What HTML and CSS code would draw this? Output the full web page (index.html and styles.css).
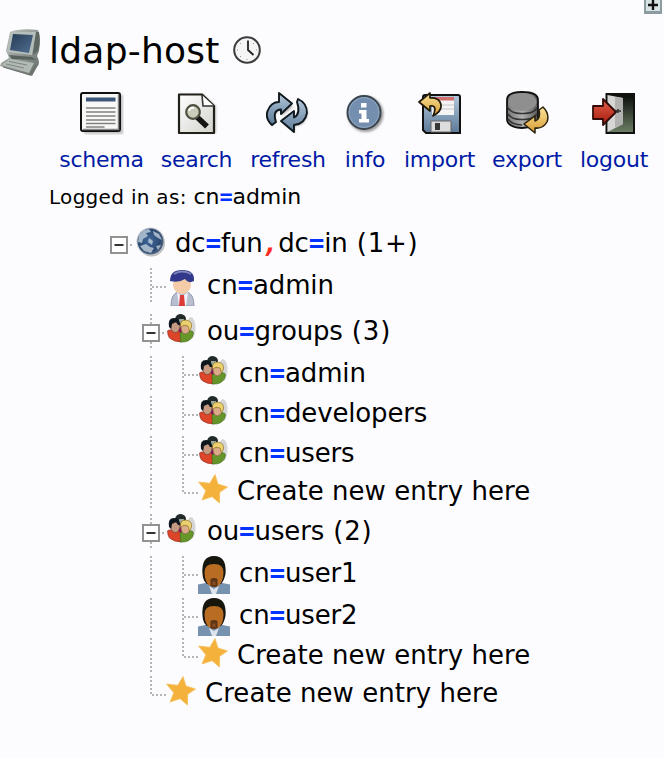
FILE: index.html
```html
<!DOCTYPE html>
<html lang="en">
<head>
<meta charset="utf-8">
<title>ldap-host</title>
<link rel="stylesheet" href="styles.css">
</head>
<body>
<svg class="defs" aria-hidden="true">
  <defs>
    <linearGradient id="gMetal" x1="0" y1="0" x2="1" y2="1"><stop offset="0" stop-color="#c5cac6"/><stop offset="1" stop-color="#626b67"/></linearGradient>
    <linearGradient id="gScreen" x1="0" y1="0" x2="1" y2="1"><stop offset="0" stop-color="#263b55"/><stop offset="1" stop-color="#526f91"/></linearGradient>
    <linearGradient id="gPaper" x1="0" y1="0" x2="1" y2="1"><stop offset="0" stop-color="#fff"/><stop offset="1" stop-color="#d2d3cd"/></linearGradient>
    <linearGradient id="gBlue" x1="0" y1="0" x2="0" y2="1"><stop offset="0" stop-color="#b4c9dc"/><stop offset="1" stop-color="#5b7997"/></linearGradient>
    <linearGradient id="gGold" x1="0" y1="0" x2="0" y2="1"><stop offset="0" stop-color="#fbe39a"/><stop offset="1" stop-color="#d89c32"/></linearGradient>
    <linearGradient id="gRed" x1="0" y1="0" x2="0" y2="1"><stop offset="0" stop-color="#e0604a"/><stop offset="1" stop-color="#a9190d"/></linearGradient>
    <linearGradient id="gDark" x1="0" y1="0" x2="0" y2="1"><stop offset="0" stop-color="#080b08"/><stop offset="1" stop-color="#6d8067"/></linearGradient>
    <linearGradient id="gDisk" x1="0" y1="0" x2="1" y2="0"><stop offset="0" stop-color="#777"/><stop offset=".5" stop-color="#b0b0b0"/><stop offset="1" stop-color="#555"/></linearGradient>
    <radialGradient id="gGlobe" cx=".45" cy=".45" r=".6"><stop offset="0" stop-color="#3f689b"/><stop offset=".7" stop-color="#2c4a73"/><stop offset="1" stop-color="#5b6c82"/></radialGradient>
    <filter id="soft" x="-20%" y="-20%" width="140%" height="140%"><feGaussianBlur stdDeviation="1.2"/></filter>
    <filter id="smooth" x="-10%" y="-10%" width="120%" height="120%"><feGaussianBlur stdDeviation=".6"/></filter>
    <symbol id="trunk" viewBox="0 0 32 36"><path class="dots" d="M17 0V34"/></symbol>
    <symbol id="branch" viewBox="0 0 32 36"><path class="dots" d="M17 0V34M18 19H32"/></symbol>
    <symbol id="corner" viewBox="0 0 32 36"><path class="dots" d="M17 0V18M18 19H32"/></symbol>
    <symbol id="minus" viewBox="0 0 32 36"><path class="dots" d="M17 0V10M17 28V34"/><use href="#minusroot"/></symbol>
    <symbol id="minusroot" viewBox="0 0 32 36"><path class="dots" d="M28 19H34"/><path d="M9 11H25V27H9Z" fill="#fff" stroke="#929292" stroke-width="2"/><path d="M12.5 19H21.5" stroke="#333" stroke-width="2"/></symbol>
    <symbol id="group" viewBox="0 0 32 32">
      <g filter="url(#smooth)">
        <ellipse cx="25" cy="14" rx="4.500" ry="11" fill="#bbb" opacity=".6"/>
        <path d="M9 5Q10 0 15 0Q20 1 20 5L18 11H12Z" fill="#20292c"/><path d="M13 5h5v4h-5z" fill="#9aa79a"/>
        <path d="M12 10h6v15h-6z" fill="#8b1160"/>
        <path d="M1.500 17Q2 15.500 7 16L13 17Q15.500 19 15.500 23L16 28Q8 28 3.500 24Q1.500 21 1.500 17Z" fill="#dc4429" stroke="#8c2417" stroke-width=".6"/>
        <path d="M14.500 28L14 19Q17 16 23 17Q27 16 27.500 19Q27 24 23 26.500Q19 28.500 14.500 28Z" fill="#66962a" stroke="#3f671a" stroke-width=".6"/>
        <path d="M5 8H13L14 13Q13 18 9.500 18.500Q5 18 5 13Z" fill="#c49a80" stroke="#5c4034" stroke-width=".6"/><path d="M3 13Q1.500 4 8 4Q14 4 14 11L12 11L10 8L6 10L5 15Z" fill="#10191e"/>
        <path d="M15 11H23L24 16Q22 20 19 20Q15 19 15 14Z" fill="#dbaa86" stroke="#795a40" stroke-width=".6"/><path d="M14.500 12Q14 6 20 6Q26.500 7 25.500 13L23.500 17L22 12Q18 10 14.500 13Z" fill="#ecd06f" stroke="#8e742a" stroke-width=".7"/>
      </g>
    </symbol>
    <symbol id="star" viewBox="0 0 30 30"><path filter="url(#smooth)" d="M17 .5L20 10L29.5 13L21.7 18.3L21.5 29L14 22.7L4 26L7.8 16.8L.5 8L11.8 9.3Z" fill="#f4b23d" stroke="#f6bf5c" stroke-width=".8"/></symbol>
    <symbol id="user" viewBox="0 0 32 38">
      <g filter="url(#smooth)"><path d="M0 38V28.500L10 26.500H22L32 28.500V38Z" fill="#7792ae"/><path d="M11 30L16 33L21 30L18 38H14Z" fill="#dde4eb"/>
      <path d="M4.500 18Q3 0 16 0Q29 0 27.500 18Q26 25 23 28H9Q5 25 4.500 18Z" fill="#171310"/><path d="M6.500 17Q6 8 16 8Q26 8 25.500 17Q25 27 20 30Q16 32 12 30Q7 27 6.500 17Z" fill="#b96d24"/>
      <path d="M12.500 23Q16 21 19.500 23V30Q16 32 12.500 30Z" fill="#5c3416"/><path d="M14.500 25.500H17.500V29H14.500Z" fill="#8a4c20"/></g>
    </symbol>
  </defs>
</svg>

<main class="panel">
  <svg class="expand" viewBox="0 0 18 14"><path d="M0 0H18V14H0Z" fill="#8b9b9f"/><path d="M2 0H16V11H2Z" fill="#d8e3e5"/><path d="M4 5H14M9 0V10" stroke="#111" stroke-width="2.400"/></svg>

  <header class="host">
    <svg class="computer" viewBox="0 0 42 50"><g filter="url(#smooth)">
      <path d="M10 5Q20 1 38 3Q41 12 39 24L37 29Q41 36 37 40L32 49L0 39L1 36L9 31L8 28L6 24Z" fill="url(#gMetal)"/>
      <path d="M35 5L39 5Q41 15 38 24L33 28Z" fill="#5d6763"/>
      <path d="M11 5L36 5L32 28L7 25Z" fill="#b5beba"/><path d="M13 7L33 8L29 26L10 23Z" fill="url(#gScreen)"/>
      <path d="M9 28L32 30L36 33L12 32Z" fill="#59635f"/><path d="M10 32L34 36L29 46L2 38Z" fill="#b1bab4"/><path d="M9 34.500L27 38M6 37L24 41" stroke="#7e8782" fill="none"/><path d="M3 40L30 48L36 38" stroke="#69726e" fill="none"/>
    </g></svg>
    <h1>ldap-host</h1>
    <svg class="clock" viewBox="0 0 28 28"><circle cx="14" cy="14" r="12.800" fill="#f5f5f5" stroke="#3c3c3c" stroke-width="2"/><path d="M15 4.500V14L20.500 19" fill="none" stroke="#222" stroke-width="1.800"/><path d="M14 23V24M4 14H5M23 14H24M7 7L8 8M21 7L20 8M7 21L8 20" stroke="#999"/></svg>
  </header>

  <nav class="toolbar">
    <a class="tool"><svg viewBox="0 0 44 44"><path d="M4 4H43V43H4Z" fill="#888" opacity=".5" filter="url(#soft)"/><rect x="1" y="2" width="39" height="38" rx="2" fill="#f8f8f7" stroke="#111" stroke-width="2"/><path d="M38.500 3.500V38.500H3" fill="none" stroke="#888" stroke-width="1.500"/><path d="M6 6.500H35.500V10.500H6Z" fill="#3c5778"/><path d="M6 17H35.500M6 21H35.500M6 25H35.500M6 29H35.500M6 32.500H35.500M6 36H24.500" stroke="#818181" stroke-width="1.600"/></svg>schema</a>
    <a class="tool"><svg viewBox="0 0 44 44"><path d="M5 3H28L41 15V42H5Z" fill="#888" opacity=".5" filter="url(#soft)"/><path d="M4 3.500H27L39 15V42H4Z" fill="url(#gPaper)" stroke="#222018" stroke-width="2.200" stroke-linejoin="round"/><path d="M27 4L28 15H39" fill="#fff" stroke="#333" stroke-width="1.600"/><path d="M22 26L32 35.500" stroke="#151515" stroke-width="5.500"/><circle cx="18" cy="21" r="6.800" fill="#c9cdb9" stroke="#4d503f" stroke-width="2.200"/><path d="M14 20Q15 16 19 17" stroke="#fff" fill="none" stroke-width="2"/></svg>search</a>
    <a class="tool"><svg viewBox="0 0 44 44"><g transform="translate(-1)"><path d="M7 35Q-1 25 4 18Q7 11 15 11V3L27 15L16 24V18Q8 19 7 35ZM35 9Q43 15 41 24Q39 34 29 34V41L16 30L29 20V27Q37 24 35 9Z" fill="#777" opacity=".5" filter="url(#soft)" transform="translate(1 1)"/><g fill="url(#gBlue)" stroke="#10171d" stroke-width="1.900" stroke-linejoin="round"><path d="M7 34Q0 28 2.500 20Q6 11 14 11V2L27 12.500L16 23V18.500Q7 19 11 31Z"/><path d="M33 8Q42 12 42 22Q40 33 29 34V41L16 30L29 20V26.500Q36 23 32 11Z"/></g></g></svg>refresh</a>
    <a class="tool"><svg viewBox="0 0 44 44"><circle cx="22.500" cy="23" r="18" fill="#777" opacity=".7" filter="url(#soft)"/><circle cx="21" cy="21.500" r="16.500" fill="#738eaf" stroke="#3b454e" stroke-width="2"/><circle cx="21" cy="21.500" r="15" fill="none" stroke="#91a8c0" stroke-width="1"/><path d="M18 12H23.500V16.500H18ZM16 19H23.500V28H26V31.500H16V28H18.500V22.500H16Z" fill="#fff"/></svg>info</a>
    <a class="tool"><svg viewBox="0 0 44 44"><path d="M5 6Q5 4 7 4H40Q42 4 42 6V42H8L5 39Z" fill="url(#gBlue)" stroke="#111" stroke-width="2"/><path d="M14 6H36V24H14Z" fill="#f4f4f4"/><path d="M14 6H36V9.500H14Z" fill="#d0716c"/><path d="M14 14H36M14 18H36" stroke="#c7c7c7"/><path d="M13 30H33V41H13Z" fill="#ddd" stroke="#666"/><path d="M17 32H22V39H17Z" fill="#353735"/><path d="M12 2L1 11L12 20V15Q20 14 15 25Q26 19 22 11Q19 6 12 7Z" fill="url(#gGold)" stroke="#211a0b" stroke-width="1.700" stroke-linejoin="round"/></svg>import</a>
    <a class="tool"><svg viewBox="0 0 44 44"><path d="M2 9Q2 1 17 1Q33 1 33 9V28Q33 36 17 37Q2 36 2 28Z" fill="url(#gDisk)" stroke="#111" stroke-width="1.800"/><ellipse cx="17.500" cy="11" rx="14" ry="9" fill="#8f8f8f"/><path d="M3 17Q7 23 17 22.500Q28 23 32 17M3 23Q7 29 17 28.500Q28 29 32 23M3 28Q7 34 17 34" fill="none" stroke="#333" stroke-width="1.600"/><path d="M38 16Q45 23 42 31Q38 38 30 37V42L19 33L30 25V30Q36 28 34 19Z" fill="url(#gGold)" stroke="#29200d" stroke-width="1.500" stroke-linejoin="round"/></svg>export</a>
    <a class="tool"><svg viewBox="0 0 44 44"><path d="M14.500 3H42V42H14.500Z" fill="url(#gDark)" stroke="#111" stroke-width="2"/><path d="M15.500 4L31 7V33L15.500 41Z" fill="#d6d6d4"/><path d="M23 6L31 7V33L23 37Z" fill="#b2b3b0"/><path d="M24 20H29M26 18V22" stroke="#333" stroke-width="1.600"/><path d="M1 15H11V8L24 21L11 34V28H1Z" fill="url(#gRed)" stroke="#320c08" stroke-width="1.800" stroke-linejoin="round"/></svg>logout</a>
  </nav>

  <p class="login"><span class="small">Logged in as:</span> cn<b class="eq">=</b>admin</p>

  <section class="tree">
    <div class="row h42"><svg class="line"><use href="#minusroot"/></svg><svg class="icon globe" viewBox="0 0 32 32"><g filter="url(#smooth)"><circle cx="17.500" cy="17" r="13.500" fill="#bbb"/><circle cx="16.500" cy="15.500" r="14" fill="#c9ccd1"/><circle cx="16.500" cy="15.500" r="13" fill="url(#gGlobe)"/><path d="M5 9Q9 3 15 3L17 6L12 7L14 10L9 13L8 17L4 16ZM19 5L25 8L28 14L24 12L20 9ZM6 20L12 18L16 21L20 22L17 27L10 25ZM15 12L19 15L18 19L14 16ZM22 20L27 19L24 24Z" fill="#c9d7e2" opacity=".75"/></g></svg><span class="name">dc<b class="eq">=</b>fun<b class="comma">,</b>dc<b class="eq">=</b>in<span class="count"> (1+)</span></span></div>
    <div class="row h46"><i class="blank"></i><svg class="line"><use href="#branch"/></svg><svg class="icon admin" viewBox="0 0 32 38"><g filter="url(#smooth)"><path d="M5 38Q5 26 12 24H21Q28 26 28 38Z" fill="#b8bfd0" stroke="#8e96ad"/><path d="M11 24L16 29L22 24L20 38H13Z" fill="#f2f3fa"/><path d="M14 27H18L19 38H13Z" fill="#dc3b39"/><ellipse cx="16" cy="17" rx="9" ry="9" fill="#f4cca8"/><path d="M4 13Q4 2 16 2Q29 2 28 13Q22 16 19 11Q13 15 4 13Z" fill="#30388c"/><path d="M8 6Q16 1 25 6" stroke="#8286bb" fill="none" stroke-width="2"/></g></svg><span class="name">cn<b class="eq">=</b>admin</span></div>
    <div class="row h42"><i class="blank"></i><svg class="line"><use href="#minus"/></svg><svg class="icon"><use href="#group"/></svg><span class="name">ou<b class="eq">=</b>groups<span class="count"> (3)</span></span></div>
    <div class="row h40"><i class="blank"></i><svg class="line"><use href="#trunk"/></svg><svg class="line"><use href="#branch"/></svg><svg class="icon"><use href="#group"/></svg><span class="name">cn<b class="eq">=</b>admin</span></div>
    <div class="row h40"><i class="blank"></i><svg class="line"><use href="#trunk"/></svg><svg class="line"><use href="#branch"/></svg><svg class="icon"><use href="#group"/></svg><span class="name">cn<b class="eq">=</b>developers</span></div>
    <div class="row h38"><i class="blank"></i><svg class="line"><use href="#trunk"/></svg><svg class="line"><use href="#branch"/></svg><svg class="icon"><use href="#group"/></svg><span class="name">cn<b class="eq">=</b>users</span></div>
    <div class="row h40"><i class="blank"></i><svg class="line"><use href="#trunk"/></svg><svg class="line"><use href="#corner"/></svg><svg class="icon star"><use href="#star"/></svg><span class="name create">Create new entry here</span></div>
    <div class="row h42"><i class="blank"></i><svg class="line"><use href="#minus"/></svg><svg class="icon"><use href="#group"/></svg><span class="name">ou<b class="eq">=</b>users<span class="count"> (2)</span></span></div>
    <div class="row h42"><i class="blank"></i><svg class="line"><use href="#trunk"/></svg><svg class="line"><use href="#branch"/></svg><svg class="icon tall"><use href="#user"/></svg><span class="name">cn<b class="eq">=</b>user1</span></div>
    <div class="row h40"><i class="blank"></i><svg class="line"><use href="#trunk"/></svg><svg class="line"><use href="#branch"/></svg><svg class="icon tall"><use href="#user"/></svg><span class="name">cn<b class="eq">=</b>user2</span></div>
    <div class="row h38"><i class="blank"></i><svg class="line"><use href="#trunk"/></svg><svg class="line"><use href="#corner"/></svg><svg class="icon star"><use href="#star"/></svg><span class="name create">Create new entry here</span></div>
    <div class="row h38"><i class="blank"></i><svg class="line"><use href="#corner"/></svg><svg class="icon star"><use href="#star"/></svg><span class="name create">Create new entry here</span></div>
  </section>
</main>
</body>
</html>
```
FILE: styles.css
```css
* { box-sizing: border-box; }
body { margin: 0; background: #fcfcfe; color: #000; font-family: Verdana, "DejaVu Sans", sans-serif; }
svg { display: block; flex: none; }
.defs { position: absolute; width: 0; height: 0; }
.panel { position: relative; width: 664px; height: 758px; overflow: hidden; }
.expand { position: absolute; top: 0; right: 2px; width: 18px; height: 14px; }
.host { display: flex; align-items: flex-start; height: 91px; padding-top: 27px; }
.computer { width: 42px; height: 50px; }
.host h1 { margin: 3px 0 0 7px; width: 183px; font-size: 36px; line-height: 42px; font-weight: 400; letter-spacing: .25px; white-space: nowrap; }
.clock { width: 28px; height: 28px; margin-top: 9px; margin-left: 1px; }
.toolbar { display: grid; grid-template-columns: 99px 91px 92px 62px 87px 88px 86px; height: 91px; padding-left: 52px; }
.tool { display: flex; flex-direction: column; align-items: center; color: #001aa6; font-size: 22px; line-height: 26px; letter-spacing: -.25px; white-space: nowrap; }
.tool svg { width: 44px; height: 44px; margin-bottom: 12px; }
.login { height: 44px; margin: 0; padding: 1px 0 0 49px; font-size: 22px; line-height: 28px; letter-spacing: -.1px; white-space: nowrap; }
.small { font-size: 20px; letter-spacing: .3px; }
.tree { padding-left: 102px; }
.row { display: flex; align-items: flex-start; }
.h38 { height: 38px; }
.h40 { height: 40px; }
.h42 { height: 42px; }
.h46 { height: 46px; }
.blank { width: 32px; flex: none; }
.line { width: 32px; height: 36px; overflow: visible; }
.icon { width: 32px; height: 32px; }
.tall, .admin { height: 38px; }
.star { width: 30px; height: 30px; }
.name { margin-left: 9px; font-size: 26px; line-height: 34px; letter-spacing: -.15px; white-space: nowrap; }
.create { letter-spacing: .05px; }
.count { letter-spacing: .8px; }
.dots { fill: none; stroke: #b5b5b5; stroke-width: 2; stroke-dasharray: 2 2; }
.eq, .comma { font-family: "DejaVu Sans Mono", monospace; font-weight: 700; }
.eq { color: #0433ff; }
.comma { color: #ff2a1a; font-style: italic; }
```
